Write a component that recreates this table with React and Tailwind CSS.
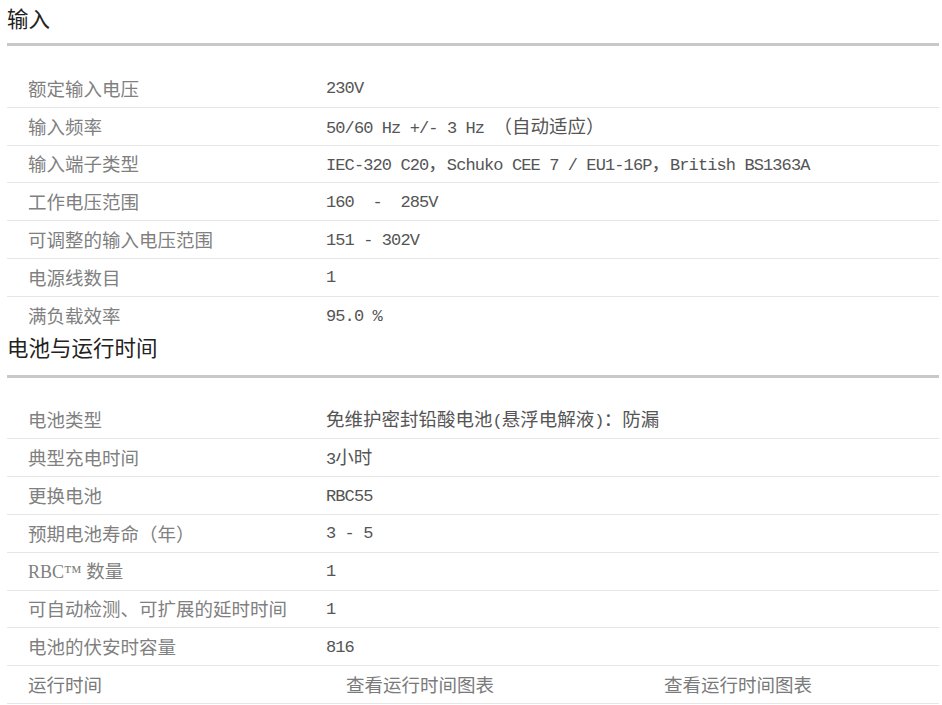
import React from "react";

const CJK = '"Noto Sans CJK SC", sans-serif';

const INPUT = [
  ["额定输入电压", "230V"],
  ["输入频率", "50/60 Hz +/- 3 Hz （自动适应）"],
  ["输入端子类型", "IEC-320 C20，Schuko CEE 7 / EU1-16P，British BS1363A"],
  ["工作电压范围", "160  -  285V"],
  ["可调整的输入电压范围", "151 - 302V"],
  ["电源线数目", "1"],
  ["满负载效率", "95.0 %"],
];

const BATTERY = [
  ["电池类型", "免维护密封铅酸电池(悬浮电解液)：防漏"],
  ["典型充电时间", "3小时"],
  ["更换电池", "RBC55"],
  ["预期电池寿命（年）", "3 - 5"],
  ["RBC™ 数量", "1"],
  ["可自动检测、可扩展的延时时间", "1"],
  ["电池的伏安时容量", "816"],
];

const CJK_RE = /([\u3000-\u303f\u4e00-\u9fff\uff00-\uffef]+)/;

// SimSun-ish look: half-width latin, full-width CJK
function Mixed({ text, serif = false }) {
  const parts = text.split(CJK_RE).filter(Boolean);
  return (
    <span className="whitespace-pre">
      {parts.map((p, i) =>
        CJK_RE.test(p) ? (
          <span key={i} className="text-[18.5px] font-['Noto_Sans_CJK_SC',sans-serif]">{p}</span>
        ) : serif ? (
          <span key={i} className="text-[18px] font-['Liberation_Serif',serif]">{p}</span>
        ) : (
          <span key={i} className="text-[17px] tracking-[-0.9px] font-['Liberation_Mono','Noto_Sans_CJK_SC',monospace]">{p}</span>
        )
      )}
    </span>
  );
}

function Heading({ children, gap = "mt-[13px]" }) {
  return (
    <div>
      <h2 className="h-[24px] leading-[24px] text-[21.5px] text-[#222] pl-[7px]" style={{ fontFamily: CJK }}>
        {children}
      </h2>
      <div className={`${gap} ml-[7px] w-[932px] h-[3px] bg-[#c8c8c8]`} />
    </div>
  );
}

function Row({ label, value, last = false }) {
  return (
    <div className={`flex items-center h-[37.8px] ${last ? "" : "border-b border-[#e6e6e6]"}`}>
      <div className="w-[319px] pl-[21px] text-[#808080] leading-none">
        <Mixed text={label} serif />
      </div>
      <div className="flex-1 text-[#555] leading-none">
        <Mixed text={value} />
      </div>
    </div>
  );
}

export default function App() {
  return (
    <div className="w-[942px] h-[705px] overflow-hidden bg-white pt-[6px]">
      <Heading>输入</Heading>
      <div className="ml-[7px] w-[932px] mt-[24px]">
        {INPUT.map(([l, v], i) => (
          <Row key={l} label={l} value={v} last={i === INPUT.length - 1} />
        ))}
      </div>

      <Heading gap="mt-[16px]">电池与运行时间</Heading>
      <div className="ml-[7px] w-[932px] mt-[24px]">
        {BATTERY.map(([l, v]) => (
          <Row key={l} label={l} value={v} />
        ))}
        <div className="flex items-center h-[37.8px] border-b border-[#e6e6e6] text-[#7a7a7a] leading-none">
          <div className="w-[339px] pl-[21px]"><Mixed text="运行时间" /></div>
          <div className="w-[318px]"><Mixed text="查看运行时间图表" /></div>
          <div><Mixed text="查看运行时间图表" /></div>
        </div>
        <div className="flex items-center h-[37.8px] text-[#808080] leading-none">
          <div className="w-[319px] pl-[21px]"><Mixed text="扩展运行时间" /></div>
        </div>
      </div>
    </div>
  );
}
